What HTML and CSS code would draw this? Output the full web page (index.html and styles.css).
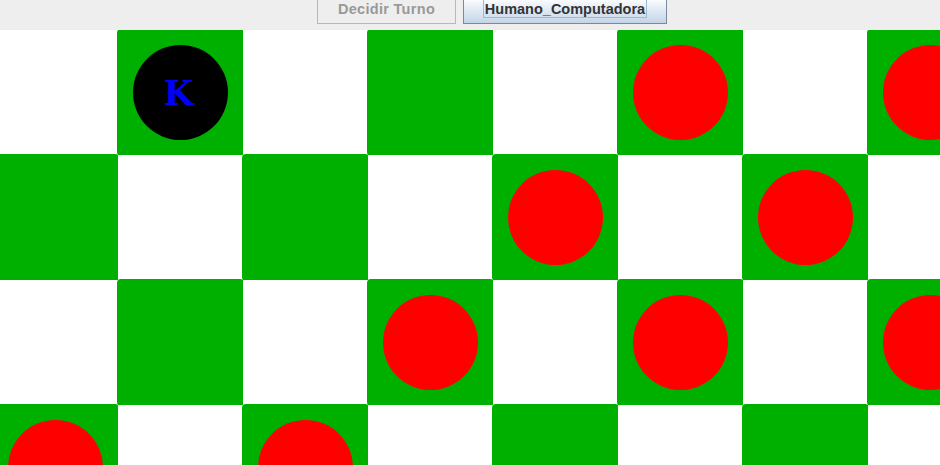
FILE: index.html
```html
<!DOCTYPE html>
<html>
<head>
<meta charset="utf-8">
<link rel="stylesheet" href="styles.css">
</head>
<body>
<div class="toolbar">
  <button class="btn btn-disabled">Decidir Turno</button>
  <button class="btn btn-active"><span class="focus">Humano_Computadora</span></button>
</div>
<div class="board">
  <div class="grid">
    <div class="cell"></div>
    <div class="cell"><div class="sq"><div class="piece king">K</div></div></div>
    <div class="cell"></div>
    <div class="cell"><div class="sq"></div></div>
    <div class="cell"></div>
    <div class="cell"><div class="sq"><div class="piece red"></div></div></div>
    <div class="cell"></div>
    <div class="cell"><div class="sq"><div class="piece red"></div></div></div>

    <div class="cell"><div class="sq"></div></div>
    <div class="cell"></div>
    <div class="cell"><div class="sq"></div></div>
    <div class="cell"></div>
    <div class="cell"><div class="sq"><div class="piece red"></div></div></div>
    <div class="cell"></div>
    <div class="cell"><div class="sq"><div class="piece red"></div></div></div>
    <div class="cell"></div>

    <div class="cell"></div>
    <div class="cell"><div class="sq"></div></div>
    <div class="cell"></div>
    <div class="cell"><div class="sq"><div class="piece red"></div></div></div>
    <div class="cell"></div>
    <div class="cell"><div class="sq"><div class="piece red"></div></div></div>
    <div class="cell"></div>
    <div class="cell"><div class="sq"><div class="piece red"></div></div></div>

    <div class="cell"><div class="sq"><div class="piece red"></div></div></div>
    <div class="cell"></div>
    <div class="cell"><div class="sq"><div class="piece red"></div></div></div>
    <div class="cell"></div>
    <div class="cell"><div class="sq"></div></div>
    <div class="cell"></div>
    <div class="cell"><div class="sq"></div></div>
    <div class="cell"></div>
  </div>
</div>
</body>
</html>
```

FILE: styles.css
```css
html, body {
  margin: 0;
  padding: 0;
  background: #ffffff;
  overflow: hidden;
}
body {
  width: 940px;
  height: 465px;
  font-family: "Liberation Sans", Arial, sans-serif;
}
.toolbar {
  height: 30px;
  background: #eeeeee;
  display: flex;
  align-items: flex-start;
  gap: 7px;
  padding-left: 317px;
  overflow: hidden;
  position: relative;
  z-index: 1;
}
.btn {
  box-sizing: border-box;
  margin: -3px 0 0 0;
  height: 27px;
  padding: 0;
  font-family: "Liberation Sans", Arial, sans-serif;
  font-weight: bold;
  font-size: 14.5px;
  display: flex;
  align-items: flex-end;
  justify-content: center;
  border-radius: 0;
}
.btn-disabled {
  width: 139px;
  height: 27px;
  background: #eeeeee;
  border: 1px solid #b8b8b8;
  color: #999999;
  padding-bottom: 6px;
  letter-spacing: 0.3px;
}
.btn-active {
  width: 204px;
  background: linear-gradient(to bottom, #ffffff 0%, #e8eff7 35%, #c4d5e7 100%);
  border: 1px solid #7a8a99;
  color: #333333;
  padding-bottom: 5px;
}
.focus {
  display: block;
  border: 1px solid #a3b8cc;
  padding: 3px 1px 0 1px;
  line-height: 15px;
}
.board {
  height: 435px;
  overflow: hidden;
}
.grid {
  display: grid;
  grid-template-columns: repeat(8, 125px);
  grid-auto-rows: 125px;
  margin-left: -7px;
  width: 1000px;
}
.cell {
  display: flex;
  background: #ffffff;
}
.sq {
  flex: 1;
  margin: -1px;
  background: #00b000;
  border-radius: 4px;
  display: flex;
  align-items: center;
  justify-content: center;
}
.piece {
  width: 95px;
  height: 95px;
  border-radius: 50%;
  flex: none;
}
.red {
  background: #ff0000;
}
.king {
  background: #000000;
  color: #0000ff;
  font-family: "DejaVu Serif", "Liberation Serif", serif;
  font-weight: bold;
  font-size: 34px;
  line-height: 1;
  display: flex;
  align-items: center;
  justify-content: center;
  padding-right: 4px;
  box-sizing: border-box;
}
```
